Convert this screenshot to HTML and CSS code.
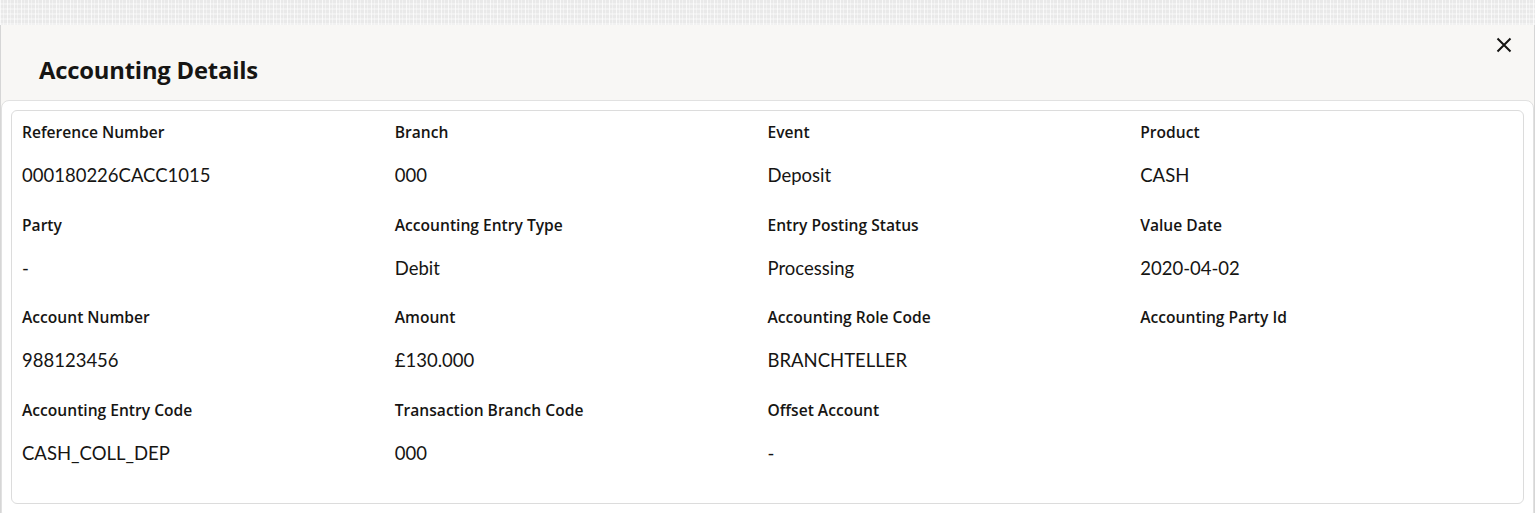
FILE: index.html
```html
<!DOCTYPE html>
<html lang="en">
<head>
<meta charset="utf-8">
<title>Accounting Details</title>
<link rel="stylesheet" href="styles.css">
</head>
<body>
<div class="backdrop"></div>
<div class="dialog">
  <div class="dialog-header">
    <h1 class="title">Accounting Details</h1>
    <button class="close" aria-label="Close">
      <svg width="16" height="16" viewBox="0 0 16 16"><path d="M1.5 1.5 L14.5 14.5 M14.5 1.5 L1.5 14.5" stroke="#161513" stroke-width="2" fill="none"/></svg>
    </button>
  </div>
  <div class="dialog-body">
    <div class="card">
      <div class="grid">
        <div class="field"><div class="label">Reference Number</div><div class="value">000180226CACC1015</div></div>
        <div class="field"><div class="label">Branch</div><div class="value">000</div></div>
        <div class="field"><div class="label">Event</div><div class="value">Deposit</div></div>
        <div class="field"><div class="label">Product</div><div class="value">CASH</div></div>

        <div class="field"><div class="label">Party</div><div class="value">-</div></div>
        <div class="field"><div class="label">Accounting Entry Type</div><div class="value">Debit</div></div>
        <div class="field"><div class="label">Entry Posting Status</div><div class="value">Processing</div></div>
        <div class="field"><div class="label">Value Date</div><div class="value">2020-04-02</div></div>

        <div class="field"><div class="label">Account Number</div><div class="value">988123456</div></div>
        <div class="field"><div class="label">Amount</div><div class="value">£130.000</div></div>
        <div class="field"><div class="label">Accounting Role Code</div><div class="value">BRANCHTELLER</div></div>
        <div class="field"><div class="label">Accounting Party Id</div><div class="value"></div></div>

        <div class="field"><div class="label">Accounting Entry Code</div><div class="value">CASH_COLL_DEP</div></div>
        <div class="field"><div class="label">Transaction Branch Code</div><div class="value">000</div></div>
        <div class="field"><div class="label">Offset Account</div><div class="value">-</div></div>
        <div class="field"></div>
      </div>
    </div>
  </div>
</div>
</body>
</html>
```
FILE: styles.css
```css
* { box-sizing: border-box; }
html, body { margin: 0; padding: 0; }
body {
  font-family: Lato, "Noto Sans", "Liberation Sans", sans-serif;
  color: #161513;
  background: #fff;
  height: 513px;
  overflow: hidden;
}
.backdrop {
  height: 25px;
  background-color: #e9e9e9;
  background-image:
    repeating-linear-gradient(90deg, rgba(255,255,255,0.7) 0 1px, transparent 1px 3px, rgba(255,255,255,0.4) 3px 4px, transparent 4px 7px),
    repeating-linear-gradient(0deg, rgba(255,255,255,0.35) 0 2px, transparent 2px 5px);
}
.dialog {
  background: #f8f7f5;
  border-left: 1px solid #d6d6d6;
  border-right: 1px solid #d6d6d6;
  height: 488px;
}
.dialog-header {
  height: 75px;
  display: flex;
  align-items: flex-start;
  justify-content: space-between;
  padding: 0 22px 0 38px;
}
.title {
  margin: 30px 0 0;
  font-family: "Open Sans", "Noto Sans", sans-serif;
  font-size: 23.8px;
  font-weight: 700;
  line-height: 30px;
  letter-spacing: -0.2px;
}
.close {
  margin-top: 12px;
  border: 0;
  background: transparent;
  padding: 0;
  width: 16px;
  height: 16px;
  display: flex;
}
.dialog-body {
  background: #fff;
  border: 1px solid #e1e1e1;
  border-radius: 8px;
  padding: 9px 9px 12px;
  height: 420px;
}
.card {
  border: 1px solid #dcdcdc;
  border-radius: 6px;
  padding: 11px 10px 10px;
}
.grid {
  display: grid;
  grid-template-columns: repeat(4, 1fr);
}
.field {
  padding-bottom: 27.7px;
}
.label {
  font-family: "Open Sans", "Noto Sans", sans-serif;
  font-size: 15.6px;
  font-weight: 600;
  line-height: 20px;
  margin-bottom: 21px;
}
.value {
  font-size: 18.5px;
  font-weight: 400;
  line-height: 24px;
  min-height: 24px;
}
```
